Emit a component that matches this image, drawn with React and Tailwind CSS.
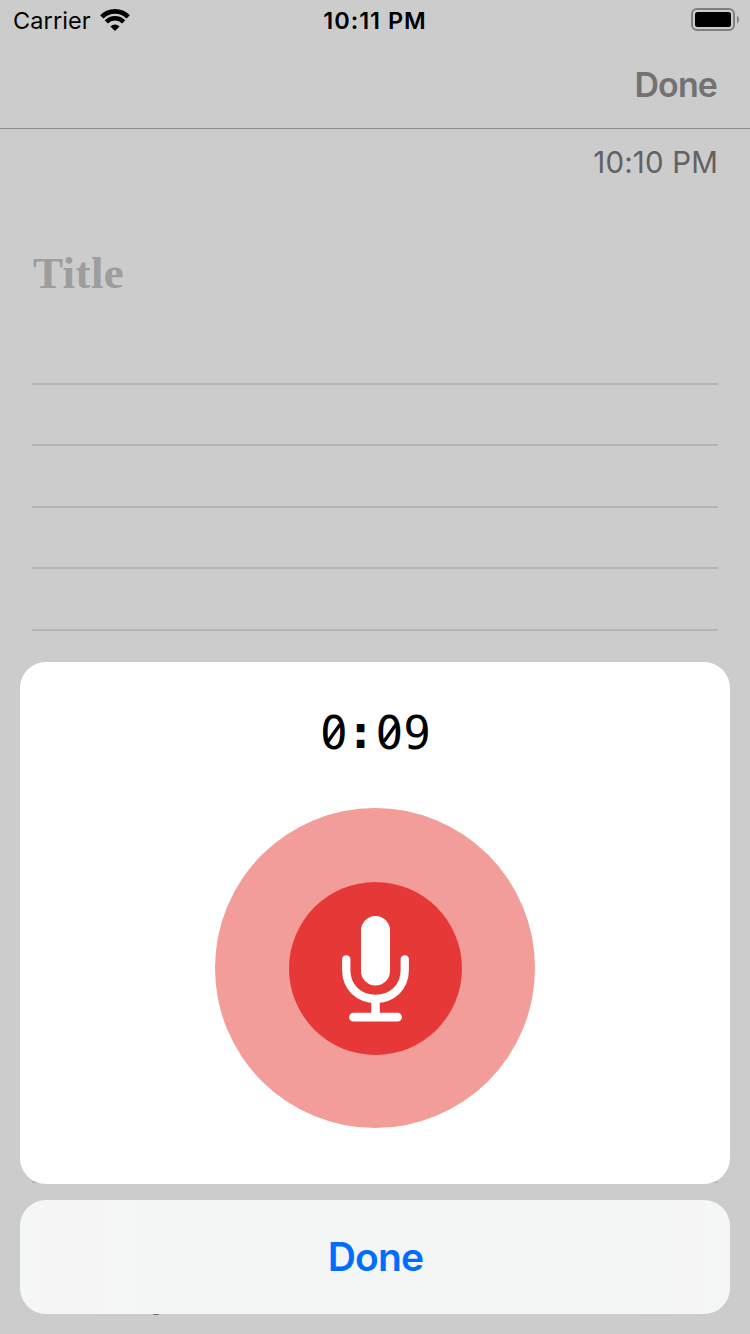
const ruledLines = Array.from({ length: 14 }, (_, i) => i);

function WifiIcon() {
  return (
    <svg className="ml-[9px] h-[24px] w-[30px]" viewBox="0 0 30 24">
      <path d="M1.8 8.9 A18.6 18.6 0 0 1 28.2 8.9" fill="none" stroke="#000" strokeWidth="4.6" />
      <path d="M6.3 13.9 A12.2 12.2 0 0 1 23.7 13.9" fill="none" stroke="#000" strokeWidth="4.4" />
      <path d="M10.4 18.6 Q15 14.6 19.6 18.6 L15 23 Z" fill="#000" />
    </svg>
  );
}

function BatteryIcon() {
  return (
    <svg className="mt-[8px] h-[23px] w-[48px]" viewBox="0 0 48 23">
      <rect x="1" y="1" width="42" height="21" rx="5" fill="none" stroke="#7f7f7f" strokeWidth="2" />
      <rect x="4" y="4" width="36" height="15" rx="2.5" fill="#000" />
      <path d="M46 7.5 Q48 9 48 11.5 Q48 14 46 15.5 Z" fill="#7f7f7f" />
    </svg>
  );
}

function SlashedZero() {
  return (
    <span className="relative inline-block">
      0
      <svg className="absolute left-[3px] top-[10px] h-[36px] w-[22px]" viewBox="0 0 22 36">
        <ellipse cx="11" cy="18" rx="5.2" ry="10" fill="#fff" />
        <path d="M5 25.5 L17 8.5" stroke="#000" strokeWidth="3.4" />
      </svg>
    </span>
  );
}

function MicIcon() {
  return (
    <svg className="h-[108px] w-[69px]" viewBox="0 -1 69 108">
      <rect x="20" y="1" width="29" height="69.5" rx="14.5" fill="#fff" />
      <path d="M5.25 44.3 V55 C5.25 72.5 18 83.8 34.5 83.8 S63.75 72.5 63.75 55 V44.3" fill="none" stroke="#fff" strokeWidth="8.3" strokeLinecap="round" />
      <path d="M34.5 84 V102" stroke="#fff" strokeWidth="8.5" />
      <path d="M12.5 102.2 H56.5" stroke="#fff" strokeWidth="8.7" strokeLinecap="round" />
    </svg>
  );
}

function StatusBar() {
  return (
    <div className="grid h-10 grid-cols-3 pl-[13px] pr-[13px] text-[23.5px] leading-[42px] text-black">
      <div className="flex">
        <span className="tracking-[0.1px]">Carrier</span>
        <span className="pt-[8px] leading-none"><WifiIcon /></span>
      </div>
      <div className="text-center font-semibold tracking-[1px] whitespace-nowrap">10:11 PM</div>
      <div className="-mr-[2px] flex justify-end"><BatteryIcon /></div>
    </div>
  );
}

export default function App() {
  return (
    <div className="relative flex h-[1334px] w-[750px] flex-col overflow-hidden bg-[#ccc] font-['Inter',sans-serif]">
      <StatusBar />
      <header className="flex h-[89px] shrink-0 items-center justify-end border-b border-[#8c8c8c] pr-[33px]">
        <span className="text-[34px] font-semibold tracking-[-0.9px] text-[#727272]">Done</span>
      </header>
      <main className="flex flex-col px-8">
        <time className="mt-[13px] self-end text-[29.5px] leading-[40px] tracking-[0.15px] text-[#626262]">10:10 PM</time>
        <h1 className="mt-[61px] h-[60px] pl-px font-['Liberation_Serif',serif] text-[45px] leading-[60px] font-bold tracking-[0.4px] text-[#9d9d9d]">Title</h1>
        <div className="mt-[80px] flex flex-col">
          {ruledLines.map((i) => (
            <div key={i} className="h-[61.38px] border-t-2 border-[#b4b4b4]" />
          ))}
        </div>
      </main>

      <div className="absolute left-[152px] top-[1308px] h-[7px] w-[8px] rounded-b-[3px] bg-[#6a6a6a]" />

      <div className="absolute inset-x-5 bottom-5 flex flex-col gap-4">
        <section className="flex h-[522px] flex-col items-center rounded-[26px] bg-white">
          <div className="mt-[44px] h-[54px] pl-px font-['DejaVu_Sans_Mono',monospace] text-[46px] leading-[54px] text-black">
            <SlashedZero /><span className="relative right-px bottom-px font-bold">:</span><SlashedZero />9
          </div>
          <div className="mt-[48px] flex size-[320px] shrink-0 items-center justify-center rounded-full bg-[#f29d99]">
            <button className="flex size-[173px] items-center justify-center rounded-full bg-[#e73838]">
              <MicIcon />
            </button>
          </div>
        </section>
        <button className="h-[114px] rounded-[26px] bg-[linear-gradient(90deg,#f5f7f7_0%,#f5f5f5_5%,#f5f5f5_10%,#f5f7f7_14%,#f4f6f6_20%,#f4f6f6_84%,#f5f5f5_94%,#f5f7f7_100%)] pl-px text-[39px] font-semibold tracking-[-0.8px] text-[#006dff]">
          Done
        </button>
      </div>
    </div>
  );
}
